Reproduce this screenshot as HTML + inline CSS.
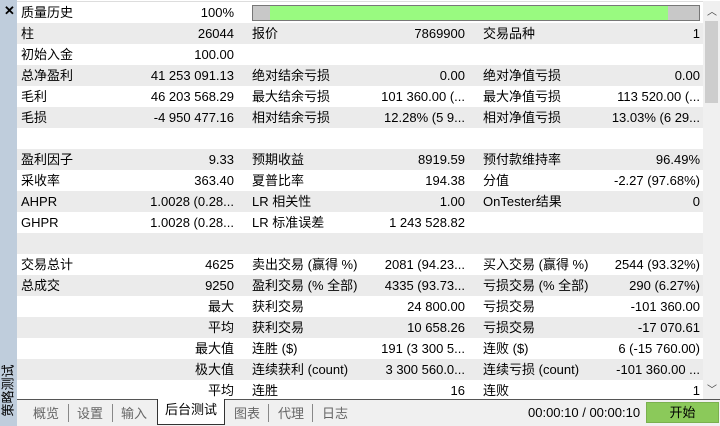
<!DOCTYPE html>
<html><head><meta charset="utf-8"><style>
*{margin:0;padding:0;box-sizing:border-box}
body{width:720px;height:426px;overflow:hidden;background:#fff;font-family:"Liberation Sans","Noto Sans CJK SC",sans-serif;font-size:13px;color:#000;position:relative}
.strip{position:absolute;left:0;top:0;width:17px;height:426px;background:#bfcddc}
.x{position:absolute;left:4px;top:3px;font-size:13px;font-weight:bold}
.vt{position:absolute;left:-22px;top:382px;width:60px;height:17px;line-height:17px;font-size:13px;text-align:center;transform:rotate(-90deg);white-space:nowrap}
.tbl{position:absolute;left:17px;top:1px;width:686px;border-top:1px solid #ddd}
.r{height:21px;position:relative;line-height:21px}
.r:nth-child(even){background:#ebebeb}
.r span{position:absolute;white-space:nowrap}
.l1{left:4px}.v1{right:469px;text-align:right}
.l2{left:235px}.v2{right:238px}
.l3{left:466px}.v3{right:3px}
.rr{right:469px}
.bar{position:absolute;left:235px;top:3px;width:448px;height:16px;border:1px solid #777;background:#c8c8c8}
.bar i{position:absolute;left:17px;top:0;width:398px;height:14px;background:#99fa80}
.sb{position:absolute;left:703px;top:1px;width:17px;height:398px;background:#f0f0f0}
.thumb{position:absolute;left:2px;top:20px;width:13px;height:82px;background:#cdcdcd}
.tabs{position:absolute;left:17px;top:399px;width:703px;height:27px;background:#f0f0f0;border-top:1px solid #555}
.tab{position:absolute;top:3px;color:#666;font-size:13px}
.sep{position:absolute;top:4px;width:1px;height:18px;background:#888}
.act{position:absolute;left:140px;top:-1px;width:68px;height:26px;background:#fff;border:1px solid #333;border-top:none;text-align:center;line-height:22px;color:#000}
.time{position:absolute;left:511px;top:5px;color:#000}
.btn{position:absolute;left:629px;top:2px;width:73px;height:21px;background:#8bc95a;border:1px solid #7ab04e;text-align:center;line-height:19px}
</style></head><body>
<div class="strip"><div class="x">✕</div><div class="vt">策略测试</div></div>
<div class="tbl">
<div class="r"><span class="l1">质量历史</span><span class="v1">100%</span><div class="bar"><i></i></div></div>
<div class="r"><span class="l1">柱</span><span class="v1">26044</span><span class="l2">报价</span><span class="v2">7869900</span><span class="l3">交易品种</span><span class="v3">1</span></div>
<div class="r"><span class="l1">初始入金</span><span class="v1">100.00</span></div>
<div class="r"><span class="l1">总净盈利</span><span class="v1">41 253 091.13</span><span class="l2">绝对结余亏损</span><span class="v2">0.00</span><span class="l3">绝对净值亏损</span><span class="v3">0.00</span></div>
<div class="r"><span class="l1">毛利</span><span class="v1">46 203 568.29</span><span class="l2">最大结余亏损</span><span class="v2">101 360.00 (...</span><span class="l3">最大净值亏损</span><span class="v3">113 520.00 (...</span></div>
<div class="r"><span class="l1">毛损</span><span class="v1">-4 950 477.16</span><span class="l2">相对结余亏损</span><span class="v2">12.28% (5 9...</span><span class="l3">相对净值亏损</span><span class="v3">13.03% (6 29...</span></div>
<div class="r"></div>
<div class="r"><span class="l1">盈利因子</span><span class="v1">9.33</span><span class="l2">预期收益</span><span class="v2">8919.59</span><span class="l3">预付款维持率</span><span class="v3">96.49%</span></div>
<div class="r"><span class="l1">采收率</span><span class="v1">363.40</span><span class="l2">夏普比率</span><span class="v2">194.38</span><span class="l3">分值</span><span class="v3">-2.27 (97.68%)</span></div>
<div class="r"><span class="l1">AHPR</span><span class="v1">1.0028 (0.28...</span><span class="l2">LR 相关性</span><span class="v2">1.00</span><span class="l3">OnTester结果</span><span class="v3">0</span></div>
<div class="r"><span class="l1">GHPR</span><span class="v1">1.0028 (0.28...</span><span class="l2">LR 标准误差</span><span class="v2">1 243 528.82</span></div>
<div class="r"></div>
<div class="r"><span class="l1">交易总计</span><span class="v1">4625</span><span class="l2">卖出交易 (赢得 %)</span><span class="v2">2081 (94.23...</span><span class="l3">买入交易 (赢得 %)</span><span class="v3">2544 (93.32%)</span></div>
<div class="r"><span class="l1">总成交</span><span class="v1">9250</span><span class="l2">盈利交易 (% 全部)</span><span class="v2">4335 (93.73...</span><span class="l3">亏损交易 (% 全部)</span><span class="v3">290 (6.27%)</span></div>
<div class="r"><span class="rr">最大</span><span class="l2">获利交易</span><span class="v2">24 800.00</span><span class="l3">亏损交易</span><span class="v3">-101 360.00</span></div>
<div class="r"><span class="rr">平均</span><span class="l2">获利交易</span><span class="v2">10 658.26</span><span class="l3">亏损交易</span><span class="v3">-17 070.61</span></div>
<div class="r"><span class="rr">最大值</span><span class="l2">连胜 ($)</span><span class="v2">191 (3 300 5...</span><span class="l3">连败 ($)</span><span class="v3">6 (-15 760.00)</span></div>
<div class="r"><span class="rr">极大值</span><span class="l2">连续获利 (count)</span><span class="v2">3 300 560.0...</span><span class="l3">连续亏损 (count)</span><span class="v3">-101 360.00 ...</span></div>
<div class="r"><span class="rr">平均</span><span class="l2">连胜</span><span class="v2">16</span><span class="l3">连败</span><span class="v3">1</span></div>
</div>
<div class="sb"><div style="position:absolute;left:4px;top:2px;font-size:10px;color:#444">︿</div><div class="thumb"></div><div style="position:absolute;left:4px;top:380px;font-size:10px;color:#444">﹀</div></div>
<div class="tabs">
<span class="tab" style="left:16px">概览</span><span class="sep" style="left:51px"></span>
<span class="tab" style="left:60px">设置</span><span class="sep" style="left:95px"></span>
<span class="tab" style="left:104px">输入</span>
<div class="act">后台测试</div>
<span class="tab" style="left:217px">图表</span><span class="sep" style="left:251px"></span>
<span class="tab" style="left:261px">代理</span><span class="sep" style="left:295px"></span>
<span class="tab" style="left:305px">日志</span>
<span class="time">00:00:10 / 00:00:10</span>
<div class="btn">开始</div>
</div>
</body></html>
